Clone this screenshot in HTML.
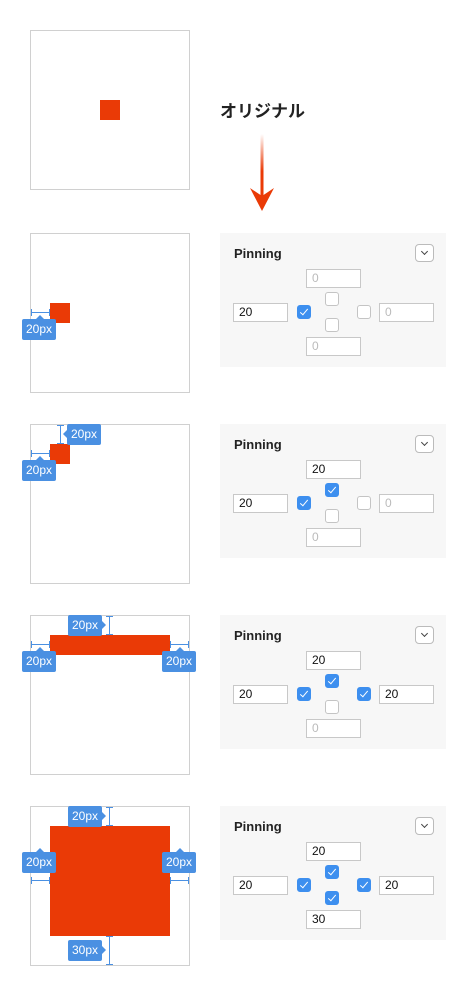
<!DOCTYPE html>
<html><head><meta charset="utf-8"><style>
*{margin:0;padding:0;box-sizing:border-box}
body{width:476px;height:996px;background:#fff;position:relative;overflow:hidden;font-family:"Liberation Sans",Arial,sans-serif}
.a{position:absolute}
.box{position:absolute;left:30px;width:160px;height:160px;border:1px solid #d0d0d0;background:#fff}
.sq{position:absolute;background:#ea3a06}
.lb{position:absolute;width:34px;height:21px;background:#4a90e2;color:#fff;font-size:12px;line-height:21px;text-align:center;border-radius:2px}
.lb.up::before{content:"";position:absolute;left:14px;top:-4px;border:4px solid transparent;border-top:0;border-bottom:4px solid #4a90e2}
.lb.rt::after{content:"";position:absolute;right:-4px;top:6px;border:4px solid transparent;border-right:0;border-left:4px solid #4a90e2}
.lb.lf::after{content:"";position:absolute;left:-4px;top:6px;border:4px solid transparent;border-left:0;border-right:4px solid #4a90e2}
.hl{position:absolute;height:1px;background:#4a90e2}
.hl::before,.hl::after{content:"";position:absolute;top:-3px;width:1px;height:7px;background:#4a90e2}
.hl::before{left:0}.hl::after{right:0}
.vl{position:absolute;width:1px;background:#4a90e2}
.vl::before,.vl::after{content:"";position:absolute;left:-3px;width:7px;height:1px;background:#4a90e2}
.vl::before{top:0}.vl::after{bottom:0}
.pn{position:absolute;left:220px;width:226px;height:134px;background:#f7f7f7}
.pt{position:absolute;left:14px;top:13px;font-size:13px;font-weight:bold;color:#222}
.dd{position:absolute;left:195px;top:11px;width:19px;height:18px;border:1px solid #bbb;border-radius:4px;background:#fff}
.dd::after{content:"";position:absolute;left:6px;top:4px;width:4px;height:4px;border-right:1.3px solid #444;border-bottom:1.3px solid #444;transform:rotate(45deg)}
.in{position:absolute;width:55px;height:19px;border:1px solid #c8c8c8;background:#fff;font-size:12px;line-height:17px;padding-left:5px;color:#111}
.in.e{color:#bbb}
.cb{position:absolute;width:14px;height:14px;border:1.5px solid #c4c4c4;border-radius:3px;background:#fff}
.cb.on{background:#3d8fef;border-color:#3d8fef}
.cb.on::after{content:"";position:absolute;left:3.5px;top:0.5px;width:3px;height:7px;border-right:1.5px solid #fff;border-bottom:1.5px solid #fff;transform:rotate(40deg)}
.sec{position:absolute;left:0;width:476px;height:170px}
</style></head><body>

<div class="box" style="top:30px"><div class="sq" style="left:69px;top:69px;width:20px;height:20px"></div></div>
<div class="a" style="left:220px;top:97px;font-size:17px;font-weight:bold;color:#222;font-family:'Liberation Sans','Noto Sans CJK JP',sans-serif">オリジナル</div>
<svg class="a" style="left:248px;top:134px" width="28" height="80"><defs><linearGradient id="g" x1="0" y1="0" x2="0" y2="1"><stop offset="0" stop-color="#ea3a06" stop-opacity="0"/><stop offset="0.6" stop-color="#ea3a06"/></linearGradient></defs><rect x="12.5" y="0" width="3" height="62" fill="url(#g)"/><path d="M2 54 L14 77 L26 54 L14 62 Z" fill="#ea3a06"/></svg>

<!-- section 1 -->
<div class="sec" style="top:233px">
<div class="box" style="top:0"></div>
<div class="sq" style="left:50px;top:70px;width:20px;height:20px"></div>
<div class="hl" style="left:31px;top:79px;width:19px"></div>
<div class="lb up" style="left:22px;top:86px">20px</div>
<div class="pn" style="top:0"><div class="pt">Pinning</div><div class="dd"></div>
<div class="in e" style="left:86px;top:36px">0</div>
<div class="in" style="left:13px;top:70px">20</div>
<div class="cb on" style="left:77px;top:72px"></div>
<div class="cb" style="left:105px;top:59px"></div>
<div class="cb" style="left:105px;top:85px"></div>
<div class="cb" style="left:137px;top:72px"></div>
<div class="in e" style="left:159px;top:70px">0</div>
<div class="in e" style="left:86px;top:104px">0</div>
</div></div>

<!-- section 2 -->
<div class="sec" style="top:424px">
<div class="box" style="top:0"></div>
<div class="sq" style="left:50px;top:20px;width:20px;height:20px"></div>
<div class="vl" style="left:60px;top:1px;height:19px"></div>
<div class="lb lf" style="left:67px;top:0px">20px</div>
<div class="hl" style="left:31px;top:29px;width:19px"></div>
<div class="lb up" style="left:22px;top:36px">20px</div>
<div class="pn" style="top:0"><div class="pt">Pinning</div><div class="dd"></div>
<div class="in" style="left:86px;top:36px">20</div>
<div class="in" style="left:13px;top:70px">20</div>
<div class="cb on" style="left:77px;top:72px"></div>
<div class="cb on" style="left:105px;top:59px"></div>
<div class="cb" style="left:105px;top:85px"></div>
<div class="cb" style="left:137px;top:72px"></div>
<div class="in e" style="left:159px;top:70px">0</div>
<div class="in e" style="left:86px;top:104px">0</div>
</div></div>

<!-- section 3 -->
<div class="sec" style="top:615px">
<div class="box" style="top:0"></div>
<div class="sq" style="left:50px;top:20px;width:120px;height:20px"></div>
<div class="vl" style="left:109px;top:1px;height:19px"></div>
<div class="lb rt" style="left:68px;top:0px">20px</div>
<div class="hl" style="left:31px;top:29px;width:19px"></div>
<div class="lb up" style="left:22px;top:36px">20px</div>
<div class="hl" style="left:170px;top:29px;width:19px"></div>
<div class="lb up" style="left:162px;top:36px">20px</div>
<div class="pn" style="top:0"><div class="pt">Pinning</div><div class="dd"></div>
<div class="in" style="left:86px;top:36px">20</div>
<div class="in" style="left:13px;top:70px">20</div>
<div class="cb on" style="left:77px;top:72px"></div>
<div class="cb on" style="left:105px;top:59px"></div>
<div class="cb" style="left:105px;top:85px"></div>
<div class="cb on" style="left:137px;top:72px"></div>
<div class="in" style="left:159px;top:70px">20</div>
<div class="in e" style="left:86px;top:104px">0</div>
</div></div>

<!-- section 4 -->
<div class="sec" style="top:806px">
<div class="box" style="top:0"></div>
<div class="sq" style="left:50px;top:20px;width:120px;height:110px"></div>
<div class="vl" style="left:109px;top:1px;height:19px"></div>
<div class="lb rt" style="left:68px;top:0px">20px</div>
<div class="hl" style="left:31px;top:74px;width:19px"></div>
<div class="lb up" style="left:22px;top:46px">20px</div>
<div class="hl" style="left:170px;top:74px;width:19px"></div>
<div class="lb up" style="left:162px;top:46px">20px</div>
<div class="vl" style="left:109px;top:130px;height:29px"></div>
<div class="lb rt" style="left:68px;top:134px">30px</div>
<div class="pn" style="top:0"><div class="pt">Pinning</div><div class="dd"></div>
<div class="in" style="left:86px;top:36px">20</div>
<div class="in" style="left:13px;top:70px">20</div>
<div class="cb on" style="left:77px;top:72px"></div>
<div class="cb on" style="left:105px;top:59px"></div>
<div class="cb on" style="left:105px;top:85px"></div>
<div class="cb on" style="left:137px;top:72px"></div>
<div class="in" style="left:159px;top:70px">20</div>
<div class="in" style="left:86px;top:104px">30</div>
</div></div>

</body></html>
